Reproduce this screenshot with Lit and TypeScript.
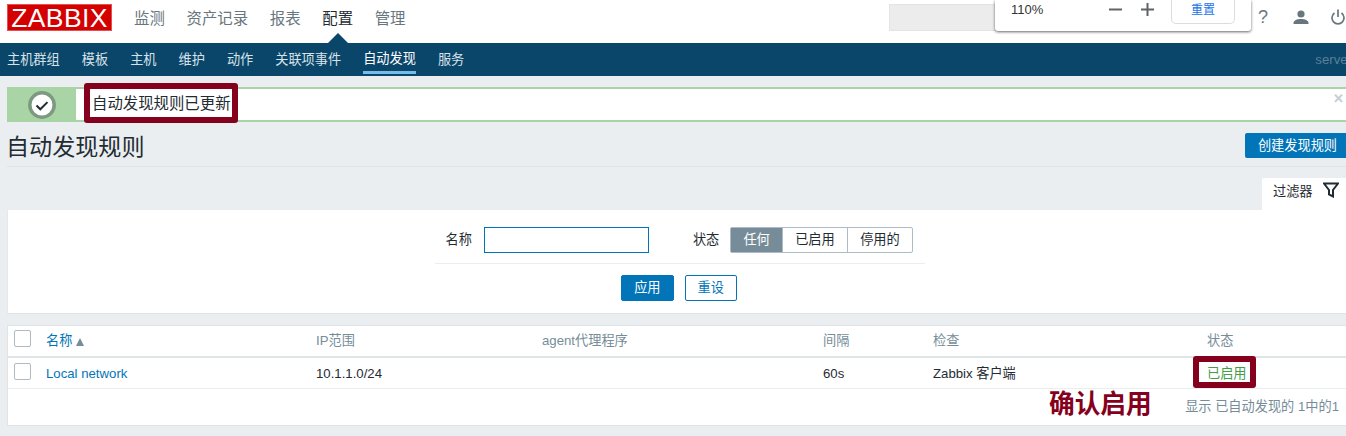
import { LitElement, html, css } from 'lit';
import { customElement } from 'lit/decorators.js';

const mainNav = ['监测', '资产记录', '报表', '配置', '管理'];
const subNav = ['主机群组', '模板', '主机', '维护', '动作', '关联项事件', '自动发现', '服务'];

@customElement('app-root')
export class AppRoot extends LitElement {
  static styles = css`
    :host {
      display: block;
      position: relative;
      width: 1346px;
      height: 436px;
      overflow: hidden;
      background: #ebeef0;
      color: #1f2c33;
      font-family: 'Liberation Sans', 'Noto Sans CJK SC', sans-serif;
      font-size: 13.2px;
    }
    a { color: inherit; text-decoration: none; }

    /* top bar */
    .top {
      height: 43px;
      background: #fff;
      display: flex;
      align-items: flex-start;
      padding-left: 7px;
    }
    .logo {
      width: 105px;
      height: 27px;
      margin-top: 4px;
      background: #d40000;
      color: #fff;
      font-size: 26.5px;
      line-height: 26px;
      text-align: center;
      letter-spacing: 0.4px;
      box-sizing: border-box;
      border: 1px solid #e25050;
    }
    .main-nav {
      display: flex;
      gap: 21.7px;
      margin-left: 22px;
      margin-top: 9px;
      font-size: 15.4px;
      line-height: 20px;
      color: #68767e;
    }
    .main-nav .on { color: #1f2c33; position: relative; }
    .main-nav .on::after {
      content: '';
      position: absolute;
      left: 50%;
      margin-left: -10px;
      top: 24px;
      border: 10px solid transparent;
      border-top: 0;
      border-bottom-color: #0a466a;
    }
    .search {
      width: 110px;
      height: 27px;
      margin: 4px 0 0 auto;
      background: #ececec;
      border: 1px solid #e4e4e4;
      box-sizing: border-box;
    }
    .icons {
      display: flex;
      align-items: center;
      width: 347px;
      height: 34px;
      justify-content: flex-end;
      padding-right: 1px;
      box-sizing: border-box;
    }
    .icons svg { display: block; }
    .help { color: #68767e; font-size: 18px; line-height: 34px; margin-right: 25px; }
    .icons .user { margin-right: 22px; }

    /* sub nav */
    .sub {
      height: 33px;
      background: #0a466a;
      display: flex;
      padding-left: 7px;
      gap: 22px;
      color: #d7e2e9;
      line-height: 33px;
    }
    .sub a { height: 31px; }
    .sub .on { color: #fff; border-bottom: 3px solid #74bde9; height: 28px; line-height: 32px; }
    .sub .server { margin-left: auto; color: #5b8095; margin-right: -6px; }

    /* message */
    .msg {
      display: flex;
      margin: 11px 0 0 7px;
      height: 35px;
      background: #a8d4a6;
      position: relative;
    }
    .msg-icon {
      width: 69px;
      display: flex;
      align-items: center;
      justify-content: center;
    }
    .msg-body {
      flex: 1;
      margin: 2px 0;
      background: #fff;
      padding-left: 16px;
      font-size: 15.4px;
      line-height: 30px;
    }
    .msg-close {
      position: absolute;
      right: 2px;
      top: 5px;
      color: #c6ced3;
      font-size: 13px;
      line-height: 14px;
      font-weight: bold;
    }

    /* title */
    .head {
      margin: 9px 0 0 7px;
      height: 35px;
      border-bottom: 1px solid #dfe4e7;
      display: flex;
      justify-content: space-between;
    }
    h1 {
      margin: 0 0 0 -1px;
      font-size: 23.1px;
      font-weight: normal;
      line-height: 32px;
      color: #1f2c33;
    }
    .create {
      width: 101px;
      height: 25px;
      margin-top: 2px;
      padding-left: 4px;
      box-sizing: border-box;
      background: #0275b8;
      color: #fff;
      line-height: 25px;
      text-align: center;
      border-radius: 2px 0 0 2px;
    }

    /* filter */
    .tab-row { display: flex; justify-content: flex-end; margin-top: 11px; }
    .tab {
      width: 84px;
      height: 32px;
      background: #fff;
      display: flex;
      align-items: center;
      gap: 10px;
      padding: 0 0 8px 11px;
      box-sizing: border-box;
      border-radius: 2px 0 0 0;
    }
    .filter {
      margin-left: 7px;
      height: 104px;
      box-sizing: border-box;
      background: #fff;
      border-bottom: 1px solid #dfe4e7;
      border-left: 1px solid #e6e9eb;
      display: flex;
      flex-direction: column;
      align-items: center;
      padding: 17px 0 0 4px;
    }
    .form-row {
      width: 490px;
      height: 36px;
      display: flex;
      align-items: flex-start;
      border-bottom: 1px solid #ebeef0;
      margin-left: 1px;
      line-height: 26px;
    }
    .form-row .name-label { margin-left: 11px; }
    .input {
      width: 165px;
      height: 26px;
      box-sizing: border-box;
      border: 1px solid #0275b8;
      margin-left: 12px;
      background: #fff;
    }
    .form-row .state-label { margin-left: 44px; }
    .seg {
      display: flex;
      margin-left: 11px;
      height: 26px;
      box-sizing: border-box;
      border: 1px solid #acbbc4;
      border-radius: 2px;
      line-height: 24px;
    }
    .seg span { padding: 0 12.2px; border-left: 1px solid #acbbc4; }
    .seg span:first-child { border-left: 0; background: #768d99; color: #fff; }
    .actions { display: flex; gap: 11px; margin-top: 11px; }
    .btn {
      height: 26px;
      box-sizing: border-box;
      border: 1px solid #0275b8;
      border-radius: 2px;
      padding: 0 12px;
      color: #0275b8;
      line-height: 24px;
    }
    .btn.primary { background: #0275b8; color: #fff; }

    /* table */
    .table {
      margin: 11px 0 0 7px;
      height: 101px;
      box-sizing: border-box;
      background: #fff;
      border: 1px solid #dfe4e7;
      border-right: 0;
    }
    .row {
      display: grid;
      grid-template-columns: 38px 270px 226px 281px 110px 274px 1fr;
      align-items: center;
      line-height: 30px;
    }
    .row.th { height: 30px; border-bottom: 2px solid #dfe4e7; color: #768d99; }
    .row.td { height: 31px; box-sizing: border-box; padding-top: 1px; border-bottom: 1px solid #ebeef0; }
    .check {
      width: 17px;
      height: 17px;
      margin: 4px 0 0 6px;
      align-self: start;
      box-sizing: border-box;
      border: 1px solid #acbbc4;
      border-radius: 2px;
    }
    .link { color: #0275b8; }
    .sort {
      display: inline-block;
      margin-left: 4px;
      vertical-align: -1px;
      border: 4.5px solid transparent;
      border-top: 0;
      border-bottom: 8px solid #768d99;
    }
    .enabled {
      color: #429e47;
      border-bottom: 1px dotted #1f2c33;
      line-height: 15px;
      padding-bottom: 1px;
      justify-self: start;
    }
    .foot {
      text-align: right;
      color: #768d99;
      padding: 10px 7px 0 0;
      line-height: 16px;
    }

    /* zoom popup from the browser */
    .zoom {
      position: absolute;
      left: 995px;
      top: 0;
      width: 256px;
      height: 31px;
      background: #fff;
      border-radius: 0 0 3px 3px;
      box-shadow: 0 1px 3px rgba(0, 0, 0, 0.6);
      display: flex;
      align-items: center;
      font-size: 13px;
      color: #333;
    }
    .zoom .pct { margin-left: 16px; width: 98px; margin-top: -12px; }
    .zoom svg { margin-top: -12px; display: block; }
    .zoom .plus { margin-left: 19px; }
    .zoom .reset {
      margin: -7px 0 0 17px;
      width: 64px;
      height: 24px;
      box-sizing: border-box;
      border: 1px solid #dadce0;
      border-radius: 0 0 5px 5px;
      border-top: 0;
      color: #1a73e8;
      font-size: 12px;
      line-height: 20px;
      text-align: center;
    }

    /* annotations drawn on top of the screenshot */
    .mark {
      position: absolute;
      box-sizing: border-box;
      border: 6px solid #85001c;
      border-radius: 3px;
    }
    .mark.one { left: 84px; top: 83px; width: 154px; height: 40px; }
    .mark.two { left: 1193px; top: 356px; width: 63px; height: 32px; }
    .note {
      position: absolute;
      left: 1049px;
      top: 387px;
      font-size: 25.7px;
      line-height: 34px;
      font-weight: bold;
      color: #85001c;
    }
  `;

  render() {
    return html`
      <div class="top">
        <div class="logo">ZABBIX</div>
        <nav class="main-nav">
          ${mainNav.map(n => html`<a class=${n === '配置' ? 'on' : ''}>${n}</a>`)}
        </nav>
        <div class="search"></div>
        <div class="icons">
          <span class="help">?</span>
          <svg class="user" width="16" height="15" viewBox="0 0 16 15" fill="#68767e">
            <circle cx="8" cy="4" r="3.600" />
            <path d="M0.500 14v-1c0-2.500 3.500-4 7.500-4s7.500 1.500 7.500 4v1z" />
          </svg>
          <svg class="power" width="14" height="16" viewBox="0 0 14 16" fill="none" stroke="#68767e" stroke-width="1.700">
            <path d="M3.500 4a6 6 0 1 0 7 0M7 0.500V8" />
          </svg>
        </div>
      </div>
      <nav class="sub">
        ${subNav.map(n => html`<a class=${n === '自动发现' ? 'on' : ''}>${n}</a>`)}
        <span class="server">server</span>
      </nav>
      <div class="msg">
        <div class="msg-icon">
          <svg width="28" height="28" viewBox="0 0 28 28">
            <circle cx="14" cy="14" r="12.200" fill="#fff" stroke="#7d9a80" stroke-width="3.500" />
            <path d="M8.500 14.500l3.800 3.800 7.200-7.200" fill="none" stroke="#1f2c33" stroke-width="2" />
          </svg>
        </div>
        <div class="msg-body">自动发现规则已更新</div>
        <span class="msg-close">✕</span>
      </div>
      <div class="head">
        <h1>自动发现规则</h1>
        <a class="create">创建发现规则</a>
      </div>
      <div class="tab-row">
        <div class="tab">
          <span>过滤器</span>
          <svg width="16" height="16" viewBox="0 0 16 16" fill="none" stroke="#1f2c33" stroke-width="2">
            <path d="M1 1.500h14L10 8v6.500l-4-2V8z" />
          </svg>
        </div>
      </div>
      <div class="filter">
        <div class="form-row">
          <span class="name-label">名称</span>
          <div class="input"></div>
          <span class="state-label">状态</span>
          <div class="seg"><span>任何</span><span>已启用</span><span>停用的</span></div>
        </div>
        <div class="actions">
          <a class="btn primary">应用</a>
          <a class="btn">重设</a>
        </div>
      </div>
      <div class="table">
        <div class="row th">
          <div class="check"></div>
          <div><a class="link">名称</a><i class="sort"></i></div>
          <div>IP范围</div>
          <div>agent代理程序</div>
          <div>间隔</div>
          <div>检查</div>
          <div>状态</div>
        </div>
        <div class="row td">
          <div class="check"></div>
          <a class="link">Local network</a>
          <div>10.1.1.0/24</div>
          <div></div>
          <div>60s</div>
          <div>Zabbix 客户端</div>
          <a class="enabled">已启用</a>
        </div>
        <div class="foot">显示 已自动发现的 1中的1</div>
      </div>
      <div class="zoom">
        <span class="pct">110%</span>
        <svg width="13" height="13" viewBox="0 0 13 13" stroke="#5f6368" stroke-width="2"><path d="M0 6.500h13" /></svg>
        <svg class="plus" width="13" height="13" viewBox="0 0 13 13" stroke="#5f6368" stroke-width="2"><path d="M0 6.500h13M6.500 0v13" /></svg>
        <span class="reset">重置</span>
      </div>
      <div class="mark one"></div>
      <div class="mark two"></div>
      <div class="note">确认启用</div>
    `;
  }
}
